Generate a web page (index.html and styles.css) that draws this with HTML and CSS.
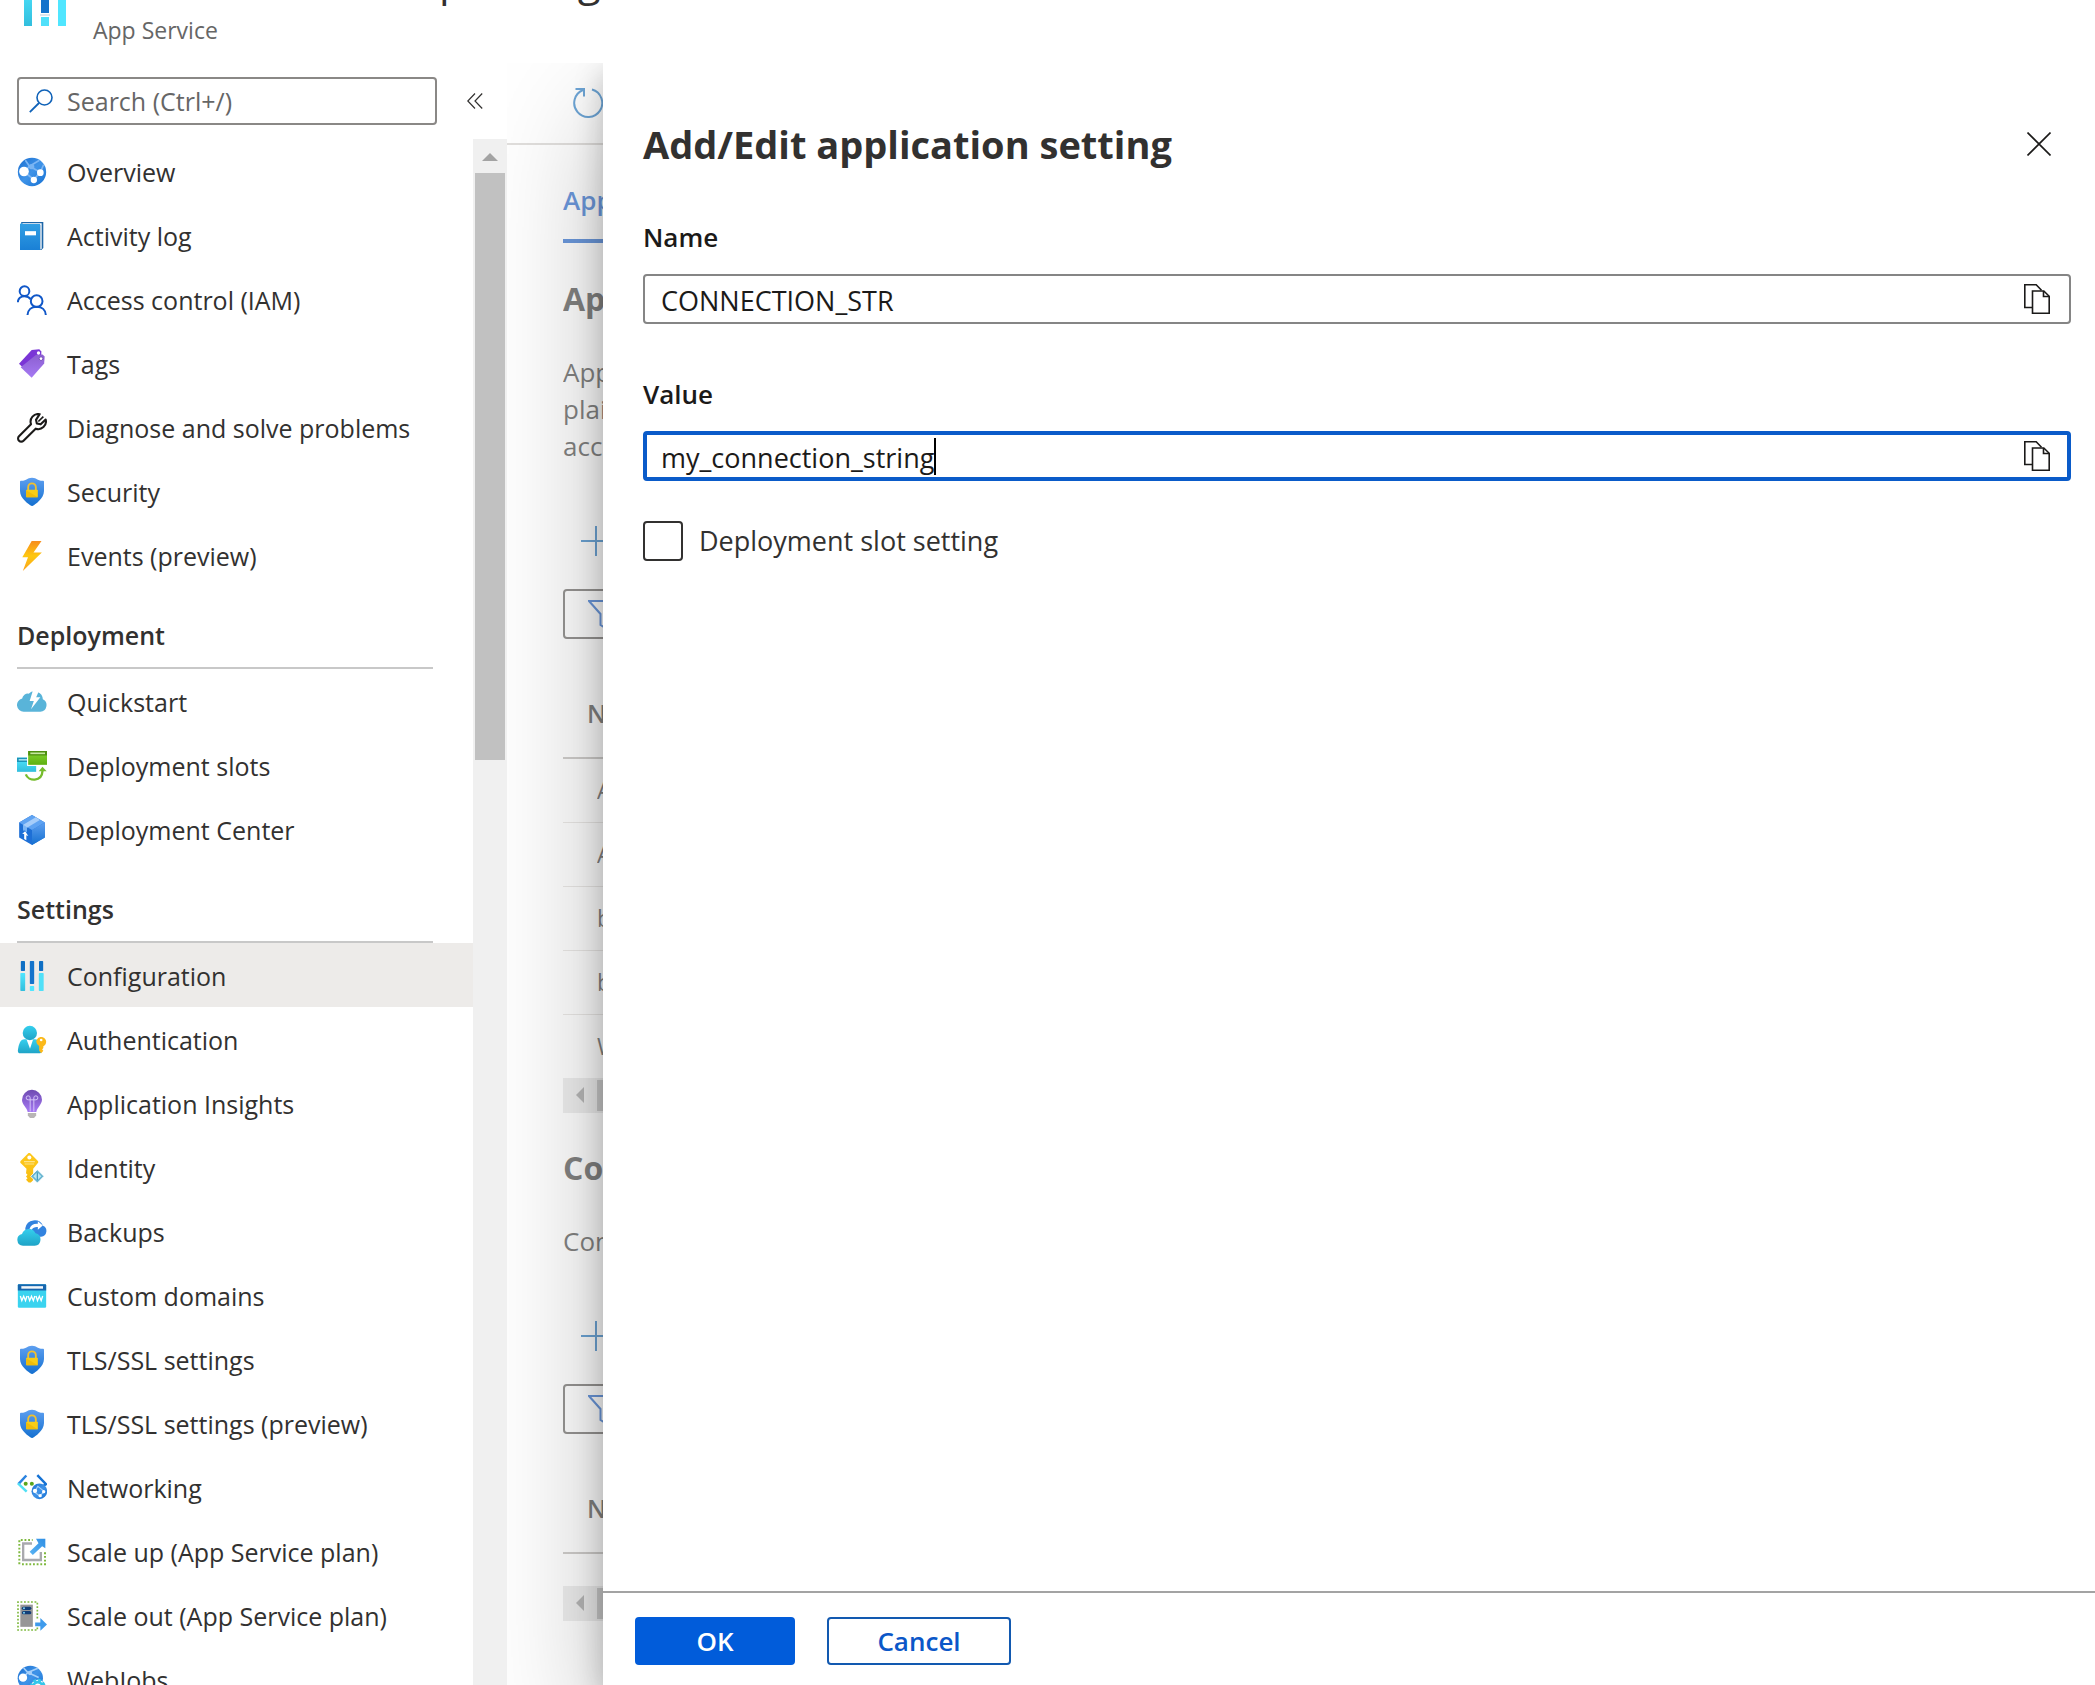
FILE: index.html
```html
<!DOCTYPE html>
<html lang="en">
<head>
<meta charset="utf-8">
<title>Configuration - App Service</title>
<meta name="viewport" content="width=device-width, initial-scale=1">
<link rel="stylesheet" href="styles.css">
</head>
<body>
<svg class="defs" width="0" height="0" aria-hidden="true">
  <defs>
    <linearGradient id="g-globe" x1="0" y1="0" x2="1" y2="1"><stop offset="0" stop-color="#1b6fd0"/><stop offset=".5" stop-color="#3f93e8"/><stop offset="1" stop-color="#1570d2"/></linearGradient>
    <linearGradient id="g-book" x1="0" y1="0" x2="0" y2="1"><stop offset="0" stop-color="#32a0e4"/><stop offset="1" stop-color="#1a80d6"/></linearGradient>
    <linearGradient id="g-tag" x1="0" y1="0" x2="0" y2="1"><stop offset="0" stop-color="#8c5fd0"/><stop offset="1" stop-color="#a67af4"/></linearGradient>
    <linearGradient id="g-shield" x1="0" y1="0" x2="0" y2="1"><stop offset="0" stop-color="#5e9ff0"/><stop offset="1" stop-color="#1470d0"/></linearGradient>
    <linearGradient id="g-bolt" x1="0" y1="0" x2="0" y2="1"><stop offset="0" stop-color="#f78d1e"/><stop offset=".5" stop-color="#fec810"/><stop offset="1" stop-color="#faa21d"/></linearGradient>
    <linearGradient id="g-cyan" x1="0" y1="0" x2="0" y2="1"><stop offset="0" stop-color="#50e6ff"/><stop offset="1" stop-color="#32bedd"/></linearGradient>
    <linearGradient id="g-cyan2" x1="0" y1="0" x2="0" y2="1"><stop offset="0" stop-color="#35cfee"/><stop offset="1" stop-color="#1fa3c6"/></linearGradient>
    <linearGradient id="g-green" x1="0" y1="0" x2="0" y2="1"><stop offset="0" stop-color="#86d633"/><stop offset="1" stop-color="#5eb010"/></linearGradient>
    <linearGradient id="g-bulb" x1="0" y1="0" x2="0" y2="1"><stop offset="0" stop-color="#6f4bb2"/><stop offset="1" stop-color="#a67af4"/></linearGradient>
    <linearGradient id="g-key" x1="0" y1="0" x2="0" y2="1"><stop offset="0" stop-color="#fec91c"/><stop offset="1" stop-color="#f8bd10"/></linearGradient>
    <linearGradient id="g-arrow" x1="0" y1="1" x2="1" y2="0"><stop offset="0" stop-color="#5ab4f4"/><stop offset="1" stop-color="#2f8fe4"/></linearGradient>

    <symbol id="i-globe" viewBox="0 0 18 18">
      <circle cx="9" cy="9" r="8.5" fill="url(#g-globe)"/>
      <path d="M4.5 9 7.5 5.5 5 2M7.5 5.5 14 9.2 16 4.500M7.500 5.500 13.500 2M4.500 9 10 13.500 14 9.200" fill="none" stroke="#7db6f4" stroke-width="1"/>
      <circle cx="8.800" cy="5.800" r="1.600" fill="#79b4f2"/>
      <circle cx="4.200" cy="8.700" r="2.900" fill="#fff"/><circle cx="14" cy="9.400" r="2" fill="#fff"/><circle cx="10.100" cy="13.800" r="1.900" fill="#fff"/>
    </symbol>
    <symbol id="i-book" viewBox="0 0 18 18">
      <path d="M2.500.600h13.300v15.600l-1.200 1.200H4z" fill="#1d66a8"/>
      <path d="M3.200 1.400h11.600v15.200L14 17.300V2.200H3z" fill="#fff"/>
      <path d="M1.800 1.800 3 1.100l.3.700h10.500v15.600H1.800z" fill="url(#g-book)"/>
      <rect x="4.800" y="6.100" width="6.600" height="2.500" fill="#fff"/>
    </symbol>
    <symbol id="i-people" viewBox="0 0 18 18">
      <g fill="none" stroke="#1057c8" stroke-width="1.200"><circle cx="4.500" cy="3.700" r="2.900"/><circle cx="11.800" cy="9.700" r="3.500"/><path d="M.5 10.400C.5 8 2.300 6.700 4.500 6.700c1.700 0 3 .700 3.800 1.900M6.300 18c.200-3 2.300-4.900 5.500-4.900s5.300 1.900 5.500 4.900"/></g>
    </symbol>
    <symbol id="i-tag" viewBox="0 0 18 18">
      <path d="M8.800.600 13.400.200l1.200 1.300v3L6 13.500 1.200 8.900z" fill="#7a35d6"/>
      <path d="m11.300 3.600 4-.300 1.300 1.200-.3 4.200-7.500 8.600-6.600-6.400z" fill="url(#g-tag)"/>
      <circle cx="12.900" cy="2.400" r="1" fill="#fff"/><circle cx="14.400" cy="5.800" r="1.100" fill="#fff" stroke="#6b3fb4" stroke-width=".5"/>
    </symbol>
    <symbol id="i-wrench" viewBox="0 0 18 18">
      <path d="M13.600.700a4.600 4.600 0 0 0-5.200 6L1.200 13.900a1.900 1.900 0 0 0 0 2.700 1.900 1.900 0 0 0 2.700 0l7.300-7.200a4.600 4.600 0 0 0 6-5.500l-3 2.900-2.300-.5-.5-2.200z" fill="none" stroke="#1b1a19" stroke-width="1.250" stroke-linejoin="round"/>
      <path d="m15.800 2.200-3 2.900" stroke="#1b1a19" stroke-width="1"/>
    </symbol>
    <symbol id="i-shield" viewBox="0 0 18 18">
      <path d="M16.200 8.400c0 4.600-5.500 8.200-6.700 8.900-.3.200-.6.200-.9 0-1.200-.700-6.800-4.300-6.800-8.900V2.800c0-.3.200-.5.500-.500C6.600 2.200 5.600.400 9 .400s2.400 1.800 6.700 1.900c.3 0 .5.200.5.500z" fill="url(#g-shield)"/>
      <path d="M6.700 8.200V6.100a2.300 2.300 0 0 1 4.600 0v2.100" fill="none" stroke="#f0c030" stroke-width="1.100"/>
      <rect x="5.500" y="7.700" width="7" height="4.500" rx=".4" fill="#f9cd16"/><path d="M5.500 8 12.500 12.100H5.900a.4.400 0 0 1-.4-.4z" fill="#f0bc0a"/>
    </symbol>
    <symbol id="i-bolt" viewBox="0 0 18 18"><path d="M8.800 0h5.900L9.900 6.900h5L3.500 18l3.100-8.200H3.200z" fill="url(#g-bolt)"/></symbol>
    <symbol id="i-quick" viewBox="0 0 18 18">
      <path d="M4 14.800a4 4 0 0 1-.9-7.900A3.500 3.500 0 0 1 7 4a5 5 0 0 1 8.500 3.400A3.900 3.900 0 0 1 14 14.800z" fill="#59b4d9"/>
      <path d="M9.500 2.300h3.700l-1.700 3.900h2.500L8.400 13.400l1.700-5H7.600z" fill="#fff"/>
    </symbol>
    <symbol id="i-slots" viewBox="0 0 18 18">
      <rect x="0" y="4" width="11.500" height="8.500" fill="url(#g-cyan)"/><rect y="4" width="6" height="2.600" fill="#1b93b8"/><rect x="1" y="4.900" width="5" height=".8" fill="#bdeef8"/>
      <rect x="6" y="0" width="12" height="9" fill="#fff"/><rect x="6.700" y="0" width="11.300" height="8.300" fill="url(#g-green)"/><rect x="6.700" width="11.300" height="2.700" fill="#4d9010"/><rect x="8" y=".9" width="8.800" height="1" fill="#c6e8a0"/>
      <path d="M5.300 14c1.500 4.300 9.600 4.800 10-2" fill="none" stroke="#76bc2d" stroke-width="1.400"/><path d="m13 12.200 2.300-2.800 2.500 2.800z" fill="#76bc2d"/>
    </symbol>
    <symbol id="i-box" viewBox="0 0 18 18">
      <path d="M9 0 16.700 4.500v9L9 18l-7.700-4.500v-9z" fill="#1d6fd6"/><path d="M16.700 4.500v9L9 18V9z" fill="url(#g-shield)"/><path d="m9 0 7.700 4.500L9 9 1.300 4.500z" fill="#5fa3f2"/>
      <path d="m11.300 1.400-7.600 4.500v3l2.300-1.300L13.700 3z" fill="#a6cdfa"/><path d="m3.700 5.900 2.300 1.400v3.200l-1.200-1.200-1.100.100z" fill="#79b4f5"/>
      <path d="m4.900 9.700 1.900 2.900-1.200-.5v3l-1.300-.7v-3l-1.200-.1z" fill="#fff"/>
    </symbol>
    <symbol id="i-config" viewBox="0 0 18 18">
      <rect x="2.300" y="0" width="2.500" height="6" rx=".4" fill="#0f6fc4"/><rect x="7.700" y="0" width="2.600" height="13.800" rx=".4" fill="#1473cb"/><rect x="13.200" y="0" width="2.500" height="6" rx=".4" fill="#0f6fc4"/>
      <rect x="2" y="7.200" width="2.900" height="10.800" rx=".4" fill="url(#g-cyan)"/><rect x="7.700" y="15" width="2.600" height="3" rx=".4" fill="#50e6ff"/><rect x="13.100" y="7.200" width="2.900" height="10.800" rx=".4" fill="#50e0f8"/>
    </symbol>
    <symbol id="i-auth" viewBox="0 0 18 18">
      <path d="M.5 15.400C1 11.500 2 8.600 4.500 8.600h6.300c2.500 0 3.500 2.900 4 6.800 0 1-.6 1.600-1.600 1.600H2c-1 0-1.500-.6-1.500-1.600z" fill="url(#g-cyan2)"/>
      <path d="M5.700 8.600h4l-1.900 5.600z" fill="#fff"/><circle cx="7.700" cy="4.800" r="4.300" fill="url(#g-cyan2)"/>
      <path d="M14.500 7.200c1.700 0 3 1.300 3 2.900 0 1.200-.7 2.200-1.700 2.700v1l-.7.900.7.800-1.300 1.500-1.200-1.500v-2.900a3 3 0 0 1-1.700-2.500c0-1.600 1.300-2.900 2.900-2.900z" fill="#fbb91a"/><circle cx="14.500" cy="9" r=".8" fill="#fff"/>
    </symbol>
    <symbol id="i-bulb" viewBox="0 0 18 18">
      <path d="M15 6.400a6 6 0 1 0-12 .200c.1 3 2.900 4.400 3.400 7.200h5.200c.5-2.900 3.300-4.400 3.400-7.400z" fill="url(#g-bulb)"/>
      <path d="M7.900 13.500V5.300a1.200 1.200 0 1 0-1.200 1.200h4.600a1.200 1.200 0 1 0-1.200-1.200v8.200" fill="none" stroke="#d4c4f8" stroke-width=".6"/>
      <path d="M6.500 14.400h5v1.500l-1.300 1.500H7.800l-1.300-1.500z" fill="#b8b5b5"/>
    </symbol>
    <symbol id="i-key" viewBox="0 0 18 18">
      <path d="M6.600.3c.4-.4 1-.4 1.500 0l4.300 4.300c.5.500.5 1.100 0 1.600L9.700 9.400v7L8.300 17.700H7l-1.600-1.600.9-1-.9-1 .9-1-.9-1 .3-2.600-3.400-3.400c-.5-.5-.5-1 0-1.500z" fill="url(#g-key)"/>
      <circle cx="7.400" cy="2.700" r="1.200" fill="#fff"/><path d="M4.200 5.200h6.500M4.600 6.600h5.700" stroke="#fde48a" stroke-width=".7"/>
      <path d="m12.200 10 4 4-4 4-4-4z" fill="#67b4cf" stroke="#fff" stroke-width=".5"/><path d="m12.200 11.500-2.400 2.500 2.400 2.400 2.400-2.400z" fill="#b9e6f4"/><path d="M12.200 11.500v4.900" stroke="#4a9fbd" stroke-width=".8"/>
    </symbol>
    <symbol id="i-backup" viewBox="0 0 18 18">
      <path d="M8 11.800A5.500 5.500 0 0 1 5 6.600 5.600 5.600 0 0 1 15.600 5.300a3.400 3.400 0 0 1-1.100 6.500z" fill="#3283df"/>
      <path d="M7.500 7.200c.6-2.300 2.500-3.400 5-3.200V2.500l3 2.600-3 2.500V6c-1.700-.100-3 .200-3.700 1.800z" fill="#fff"/>
      <path d="M3.600 17.300a3.600 3.600 0 0 1-.6-7.100A4.300 4.300 0 0 1 11.100 9.800a3.800 3.800 0 0 1-.5 7.500z" fill="url(#g-cyan2)"/>
    </symbol>
    <symbol id="i-www" viewBox="0 0 18 18">
      <rect x=".5" y="2" width="17" height="14" rx=".5" fill="#3ad3ef"/><path d="M.5 5.700V2.500A.5.500 0 0 1 1 2h16a.5.500 0 0 1 .5.500v3.200z" fill="#1766ae"/><rect x="2.600" y="3.100" width="13" height="1.500" fill="#f2f6fa"/>
      <path d="m2 9 .9 2.800L4 9.200l1.100 2.600.9-2.800M6.700 9l.9 2.800 1.100-2.600 1.100 2.600.9-2.800M11.400 9l.9 2.800 1.100-2.600 1.100 2.600.9-2.800" fill="none" stroke="#fff" stroke-width=".8"/>
    </symbol>
    <symbol id="i-net" viewBox="0 0 18 18">
      <path d="M5.600 1.500.8 6.700" stroke="#2a83e0" stroke-width="1.500"/><path d="m.6 6.200 5.200 5" stroke="#50e0f5" stroke-width="1.500"/><path d="m12.200 1.300 5.200 5.400-1.500 1" stroke="#1572d4" stroke-width="1.500" fill="none"/>
      <circle cx="5.200" cy="6.500" r="1.200" fill="#5aa51c"/><circle cx="8.900" cy="6.500" r="1.200" fill="#5aa51c"/>
      <circle cx="13.400" cy="11" r="4.700" fill="url(#g-globe)"/><path d="m10.500 11.500 2-3.500 4 3.200-3 2.500z" fill="none" stroke="#a6d0fa" stroke-width=".7"/><circle cx="10.800" cy="10.700" r="1.300" fill="#fff"/><circle cx="16" cy="11.200" r="1" fill="#fff"/><circle cx="13.900" cy="13.600" r="1" fill="#fff"/>
    </symbol>
    <symbol id="i-up" viewBox="0 0 18 18">
      <path d="M1.400 16.300V1.800h8M3 16.300h13.800V8.500" fill="none" stroke="#7fb93f" stroke-width="1.200" stroke-dasharray="1.100 1.100"/>
      <path d="M9 3.900H3.700v9.900h10.600V9" fill="none" stroke="#a9a9ae" stroke-width="1.400"/><path d="m7.600 8.800 5.300-5.100-1.500-2.600h5.600v5.700l-1.900-1.200-5.600 5.200z" fill="url(#g-arrow)"/>
    </symbol>
    <symbol id="i-out" viewBox="0 0 18 18">
      <path d="M12.200 10.500V.6H.6v16.800h11.600v-1.500" fill="none" stroke="#7fb93f" stroke-width="1" stroke-dasharray="1.100 1"/>
      <rect x="2" y="2.200" width="7.500" height="13.300" fill="#969696"/><rect x="2.900" y="3.400" width="5.700" height="2" rx="1" fill="#123f77"/><rect x="2.900" y="6" width="5.700" height="2" rx="1" fill="#123f77"/><circle cx="4.200" cy="4.400" r=".6" fill="#7fd3f4"/><circle cx="4.200" cy="7" r=".6" fill="#7fd3f4"/>
      <path d="M10.900 12.900h3.100v-2.700l4 3.900-4 3.800v-2.700h-3.100z" fill="#3f9bec"/>
    </symbol>
    <symbol id="i-jobs" viewBox="0 0 18 18">
      <circle cx="8" cy="8" r="7.600" fill="url(#g-globe)"/><path d="M3.500 8 6.500 4.500 13 7.500M6.500 4.500 4 1.800M6.500 4.500l6-2.500" fill="none" stroke="#a6d0fa"/><circle cx="3.600" cy="7.600" r="2.500" fill="#fff"/><circle cx="7.800" cy="4.800" r="1.300" fill="#a6d0fa"/>
      <circle cx="12.500" cy="13" r="4.100" fill="#fff"/><circle cx="12.500" cy="13" r="3.500" fill="none" stroke="#35c6ea" stroke-width="2.400" stroke-dasharray="1.700 1"/><circle cx="12.500" cy="13" r="2.700" fill="none" stroke="#35c6ea" stroke-width="1.600"/>
    </symbol>
    <symbol id="i-copy" viewBox="0 0 26 30">
      <path d="M8 23.500H.800V.800h11.400l5.300 5.500" fill="none" stroke="#1b1a19" stroke-width="1.600"/><path d="M8.500 7h11.300l5.400 5.300v16.900H8.500z" fill="#fff" stroke="#1b1a19" stroke-width="1.600"/><path d="M19.500 7v5.500h5.700" fill="none" stroke="#1b1a19" stroke-width="1.600"/>
    </symbol>
    <symbol id="i-plus" viewBox="0 0 30 30"><path d="M15 0v30M0 15h30" stroke="#0f6cbd" stroke-width="2"/></symbol>
    <symbol id="i-filter" viewBox="0 0 30 30"><path d="M1 2h28L17.500 15v14l-5-3V15z" fill="none" stroke="#0b57c8" stroke-width="2"/></symbol>
  </defs>
</svg>

<header class="topbar">
  <svg class="topbar-icon" viewBox="0 0 42 42" aria-hidden="true">
    <rect x="0" y="0" width="8" height="42" fill="url(#g-cyan)"/><rect x="17" y="0" width="8" height="29" fill="#1473cb"/><rect x="16" y="30" width="10" height="2" fill="#dfe6ec"/><rect x="17" y="33" width="8" height="9" fill="#50e0fa"/><rect x="34" y="0" width="8" height="42" fill="#50e6ff"/>
  </svg>
  <div class="topbar-text">
    <h1 class="topbar-title">p Configuration</h1>
    <p class="topbar-kind">App Service</p>
  </div>
</header>

<div class="workspace">
  <nav class="sidebar" aria-label="App Service">
    <div class="sidebar-tools">
      <label class="search">
        <svg class="search-icon" viewBox="0 0 24 24" aria-hidden="true"><circle cx="15.500" cy="8.500" r="7.500" fill="none" stroke="#0f62b8" stroke-width="1.600"/><path d="M10 14 .8 23.200" stroke="#0f62b8" stroke-width="1.800"/></svg>
        <input class="search-input" type="search" placeholder="Search (Ctrl+/)" aria-label="Search">
      </label>
      <button class="collapse" type="button" aria-label="Collapse menu"><svg viewBox="0 0 16 16"><path d="M8 .5.800 8 8 15.500M15.200.500 8 8l7.200 7.500" fill="none" stroke="#323130" stroke-width="1.200"/></svg></button>
    </div>
    <div class="menu-frame">
      <div class="menu">
        <a class="item" href="#"><svg><use href="#i-globe"/></svg>Overview</a>
        <a class="item" href="#"><svg><use href="#i-book"/></svg>Activity log</a>
        <a class="item" href="#"><svg><use href="#i-people"/></svg>Access control (IAM)</a>
        <a class="item" href="#"><svg><use href="#i-tag"/></svg>Tags</a>
        <a class="item" href="#"><svg><use href="#i-wrench"/></svg>Diagnose and solve problems</a>
        <a class="item" href="#"><svg><use href="#i-shield"/></svg>Security</a>
        <a class="item" href="#"><svg><use href="#i-bolt"/></svg>Events (preview)</a>
        <h2 class="group">Deployment</h2>
        <a class="item" href="#"><svg><use href="#i-quick"/></svg>Quickstart</a>
        <a class="item" href="#"><svg><use href="#i-slots"/></svg>Deployment slots</a>
        <a class="item" href="#"><svg><use href="#i-box"/></svg>Deployment Center</a>
        <h2 class="group">Settings</h2>
        <a class="item item-active" href="#" aria-current="page"><svg><use href="#i-config"/></svg>Configuration</a>
        <a class="item" href="#"><svg><use href="#i-auth"/></svg>Authentication</a>
        <a class="item" href="#"><svg><use href="#i-bulb"/></svg>Application Insights</a>
        <a class="item" href="#"><svg><use href="#i-key"/></svg>Identity</a>
        <a class="item" href="#"><svg><use href="#i-backup"/></svg>Backups</a>
        <a class="item" href="#"><svg><use href="#i-www"/></svg>Custom domains</a>
        <a class="item" href="#"><svg><use href="#i-shield"/></svg>TLS/SSL settings</a>
        <a class="item" href="#"><svg><use href="#i-shield"/></svg>TLS/SSL settings (preview)</a>
        <a class="item" href="#"><svg><use href="#i-net"/></svg>Networking</a>
        <a class="item" href="#"><svg><use href="#i-up"/></svg>Scale up (App Service plan)</a>
        <a class="item" href="#"><svg><use href="#i-out"/></svg>Scale out (App Service plan)</a>
        <a class="item" href="#"><svg><use href="#i-jobs"/></svg>WebJobs</a>
      </div>
      <div class="scrollbar" aria-hidden="true">
        <svg class="scroll-up" viewBox="0 0 34 34"><path d="m9 22 8-8 8 8z" fill="#a3a3a3"/></svg>
        <div class="scroll-thumb"></div>
      </div>
    </div>
  </nav>

  <div class="blade">
    <main class="content">
      <div class="toolbar">
        <button class="bare" type="button" aria-label="Refresh"><svg class="ico" viewBox="0 0 30 30"><path d="M19 1.500A14 14 0 1 1 10 2M2.500 1H11v7.500" fill="none" stroke="#0f6cbd" stroke-width="2"/></svg></button>
      </div>
      <div class="content-body">
        <a class="tab" href="#">App</a>
        <section>
          <h2 class="section-title">App</h2>
          <p class="section-copy">App<br>plai<br>acc</p>
          <button class="bare add" type="button" aria-label="New application setting"><svg class="ico"><use href="#i-plus"/></svg></button>
          <button class="filter" type="button" aria-label="Filter application settings"><svg class="ico"><use href="#i-filter"/></svg></button>
          <table class="grid">
            <thead><tr><th>Name</th></tr></thead>
            <tbody><tr><td>A</td></tr><tr><td>A</td></tr><tr><td>b</td></tr><tr><td>b</td></tr><tr><td>W</td></tr></tbody>
          </table>
          <div class="hscroll" aria-hidden="true"><svg viewBox="0 0 34 34"><path d="m13 17 8-8v16z" fill="#8a8a8a"/></svg><div class="hthumb"></div></div>
        </section>
        <section class="section-next">
          <h2 class="section-title">Con</h2>
          <p class="section-copy">Con</p>
          <button class="bare add" type="button" aria-label="New connection string"><svg class="ico"><use href="#i-plus"/></svg></button>
          <button class="filter" type="button" aria-label="Filter connection strings"><svg class="ico"><use href="#i-filter"/></svg></button>
          <table class="grid grid-empty"><thead><tr><th>Name</th></tr></thead></table>
          <div class="hscroll" aria-hidden="true"><svg viewBox="0 0 34 34"><path d="m13 17 8-8v16z" fill="#8a8a8a"/></svg><div class="hthumb"></div></div>
        </section>
      </div>
    </main>

    <form class="panel" aria-labelledby="panel-title">
      <div class="panel-body">
        <div class="panel-head">
          <h2 class="panel-title" id="panel-title">Add/Edit application setting</h2>
          <button class="close" type="button" aria-label="Close"><svg viewBox="0 0 24 24"><path d="m.5.500 23 23M23.500.500l-23 23" stroke="#1b1a19" stroke-width="1.600"/></svg></button>
        </div>
        <div class="field">
          <label class="field-label" for="name">Name</label>
          <div class="box">
            <input class="box-input" id="name" type="text" value="CONNECTION_STR">
            <button class="copy" type="button" aria-label="Copy name"><svg><use href="#i-copy"/></svg></button>
          </div>
        </div>
        <div class="field">
          <label class="field-label" for="value">Value</label>
          <div class="box box-focus">
            <input class="box-input" id="value" type="text" value="my_connection_string">
            <span class="caret"></span>
            <button class="copy" type="button" aria-label="Copy value"><svg><use href="#i-copy"/></svg></button>
          </div>
        </div>
        <label class="check"><input class="check-box" type="checkbox">Deployment slot setting</label>
      </div>
      <div class="panel-foot">
        <button class="btn btn-primary" type="button">OK</button>
        <button class="btn btn-plain" type="button">Cancel</button>
      </div>
    </form>
  </div>
</div>
</body>
</html>
```
FILE: styles.css
```css
*, *::before, *::after { box-sizing: border-box; }

body {
  margin: 0;
  height: 100vh;
  display: flex;
  flex-direction: column;
  overflow: hidden;
  background: #fff;
  color: #323130;
  font: 25px/32px "Open Sans", "Noto Sans", sans-serif;
}

h1, h2, p { margin: 0; }
a { color: inherit; text-decoration: none; }
svg { display: block; flex: none; }
button, input { font: inherit; color: inherit; }
button { padding: 0; border: 0; background: none; }
.defs { position: absolute; }

/* Top bar */
.topbar {
  flex: none;
  height: 63px;
  padding-left: 24px;
  display: flex;
  align-items: flex-end;
  gap: 27px;
}
.topbar-icon { width: 42px; height: 42px; margin-bottom: 37px; }
.topbar-text { padding-bottom: 17px; }
.topbar-title { margin-bottom: 6px; padding-left: 346px; font-size: 42px; line-height: 56px; font-weight: 400; white-space: nowrap; }
.topbar-kind { font-size: 23px; line-height: 32px; color: #666; }

/* Workspace */
.workspace { flex: 1; min-height: 0; display: flex; }

/* Sidebar */
.sidebar { flex: none; width: 507px; display: flex; flex-direction: column; }
.sidebar-tools { flex: none; height: 76px; padding: 14px 24px 14px 17px; display: flex; align-items: center; gap: 30px; }
.search { flex: 1; height: 48px; padding: 0 12px 0 10px; display: flex; align-items: center; gap: 14px; border: 2px solid #8a8886; border-radius: 4px; }
.search-icon { width: 24px; height: 24px; }
.search-input { flex: 1; min-width: 0; padding: 0; border: 0; outline: 0; background: none; }
.search-input::placeholder { color: #666; opacity: 1; }
.collapse svg { width: 16px; height: 16px; }
.menu-frame { flex: 1; min-height: 0; display: flex; }
.menu { flex: 1; overflow: hidden; }
.item { height: 64px; padding: 2px 17px 0; display: flex; align-items: center; gap: 20px; white-space: nowrap; }
.item svg { width: 30px; height: 30px; }
.item-active { background: #edebe9; }
.group { height: 82px; margin: 0 40px 0 17px; padding-top: 32px; border-bottom: 2px solid #c8c8c8; font-size: 25px; line-height: 32px; font-weight: 600; }
.scrollbar { flex: none; width: 34px; background: #f0f0f0; }
.scroll-up { width: 34px; height: 34px; }
.scroll-thumb { height: 587px; margin: 0 2px; background: #c1c1c1; }

/* Page behind the panel */
.blade { flex: 1; min-width: 0; position: relative; overflow: hidden; }
.content { height: 100%; overflow: hidden; }
.toolbar { height: 82px; padding: 25px 66px; border-bottom: 2px solid #e1dfdd; }
.toolbar svg, .add svg, .filter svg, .tab, .section-title, .section-copy, .grid th, .grid td, .hscroll { opacity: .6; }
.ico { width: 30px; height: 30px; }
.content-body { padding: 37px 56px 0; }
.tab { display: block; height: 61px; padding-top: 2px; border-bottom: 4px solid #0b57c8; color: #0b57c8; font-size: 26px; font-weight: 600; }
.section-title { margin-top: 34px; font-size: 32px; line-height: 44px; font-weight: 700; }
.section-copy { margin-top: 33px; font-size: 26px; line-height: 37px; }
.bare { display: block; }
.add { margin: 61px 0 0 18px; }
.filter { display: flex; align-items: center; width: 100%; height: 50px; margin-top: 33px; padding-left: 23px; border: 2px solid #979593; border-radius: 4px; }
.grid { width: 100%; margin-top: 45px; border-collapse: collapse; table-layout: fixed; text-align: left; }
.grid th { height: 74px; padding: 0 24px 16px; border-bottom: 2px solid #d0cecc; font-weight: 600; }
.grid td { height: 64px; padding: 0 34px; border-bottom: 1px solid #ebe9e7; font-size: 23px; }
.grid tr:last-child td { border-bottom: 0; }
.hscroll { display: flex; height: 35px; background: #e4e4e4; }
.hscroll svg { width: 34px; height: 34px; }
.hthumb { flex: 1; margin: 2px 0; background: #aaa; }
.section-next .section-title { margin-top: 33px; }
.grid-empty { margin-bottom: 32px; }

/* Side panel */
.panel {
  position: absolute;
  inset: 0 0 0 96px;
  display: flex;
  flex-direction: column;
  background: #fff;
  box-shadow: 0 50px 116px rgba(0, 0, 0, .26), 0 10px 28px rgba(0, 0, 0, .22);
}
.panel-body { flex: 1; padding: 55px 24px 0 40px; }
.panel-head { display: flex; align-items: center; justify-content: space-between; padding-right: 20px; }
.panel-title { font-size: 38px; line-height: 52px; font-weight: 700; }
.close svg { width: 24px; height: 24px; }
.field { margin-top: 54px; color: #1b1a19; }
.panel-head + .field { margin-top: 51px; }
.field-label { display: block; font-size: 26px; font-weight: 600; }
.box { position: relative; height: 50px; margin-top: 21px; padding: 0 19px 0 16px; display: flex; align-items: center; border: 2px solid #858585; border-radius: 4px; }
.box-focus { padding: 0 17px 0 14px; border: 4px solid #0a5bc9; }
.box-input { flex: 1; min-width: 0; height: 42px; padding: 2px 0 0; border: 0; outline: 0; background: none; font-size: 27px; line-height: 40px; }
.caret { position: absolute; top: 3px; left: 287px; width: 2px; height: 37px; background: #000; }
.copy svg { width: 26px; height: 30px; }
.check { margin-top: 40px; display: flex; align-items: center; gap: 16px; font-size: 27px; }
.check-box { appearance: none; width: 40px; height: 40px; margin: 0; border: 2px solid #323130; border-radius: 4px; background: #fff; }
.panel-foot { flex: none; display: flex; gap: 32px; padding: 24px 32px 20px; border-top: 2px solid #a3a3a3; }
.btn { height: 48px; border-radius: 4px; font-size: 26px; font-weight: 600; }
.btn-primary { width: 160px; background: #015cda; color: #fff; }
.btn-plain { width: 184px; border: 2px solid #1259b0; color: #0b57c8; }
```
